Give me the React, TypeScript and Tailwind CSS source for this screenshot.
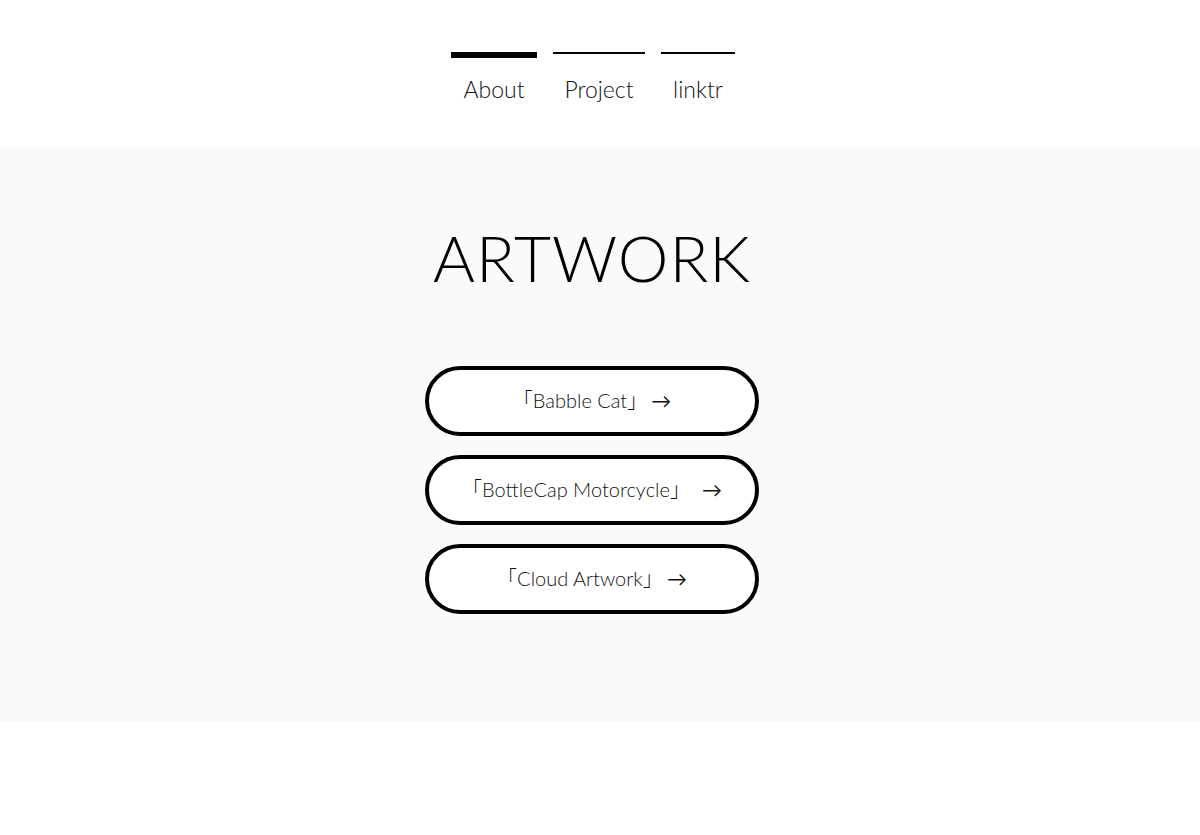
const navItems = [
  { name: 'About', width: 'w-[86px]', active: true },
  { name: 'Project', width: 'w-[92px]', active: false },
  { name: 'linktr', width: 'w-[74px]', active: false },
];

const works = [
  { title: '「Babble Cat」', gap: 'ml-1' },
  { title: '「BottleCap Motorcycle」', gap: 'ml-3' },
  { title: '「Cloud Artwork」', gap: 'ml-1' },
];

export default function App() {
  return (
    <div className="min-h-[835px] bg-white text-[#111]" style={{ fontFamily: 'Lato, "Noto Sans CJK JP", sans-serif' }}>
      <header className="h-[147px] flex justify-center pt-[52px]">
        <nav className="flex gap-4 ml-[-14px]">
          {navItems.map((item) => (
            <a key={item.name} href="#" className={`${item.width} flex flex-col items-center`}>
              <span className={`w-full bg-black ${item.active ? 'h-[6px]' : 'h-[2px] mb-[4px]'}`} />
              <span className="mt-[20px] text-[23px] font-light leading-none">{item.name}</span>
            </a>
          ))}
        </nav>
      </header>

      <main className="h-[575px] bg-[#fafafa] flex flex-col items-center">
        <h1 className="mt-[79px] ml-[-16px] text-[64px] font-light leading-none tracking-[1px] text-black">
          ARTWORK
        </h1>
        <div className="mt-[76px] ml-[-16px] flex flex-col gap-[19px]">
          {works.map((w) => (
            <a
              key={w.title}
              href="#"
              className="w-[334px] h-[70px] rounded-full border-[4px] border-black bg-white flex items-center justify-center pb-[3px] text-[20px] font-light text-[#111]"
            >
              <span>{w.title}</span>
              <span className={`${w.gap} font-normal`}>→</span>
            </a>
          ))}
        </div>
      </main>
    </div>
  );
}
